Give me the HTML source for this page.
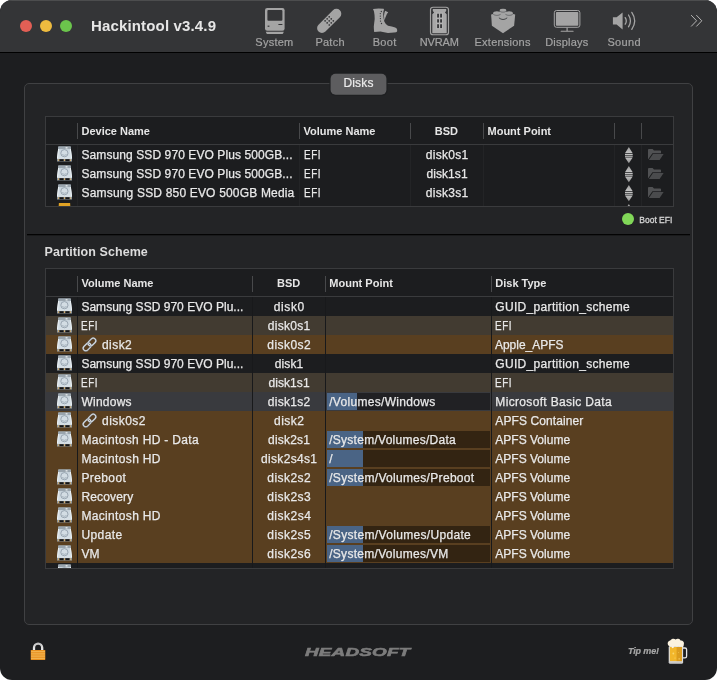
<!DOCTYPE html>
<html lang="en">
<head>
<meta charset="utf-8">
<title>Hackintool v3.4.9</title>
<style>
*{box-sizing:border-box;margin:0;padding:0}
html,body{width:717px;height:680px;background:#fff;overflow:hidden}
body{font-family:"Liberation Sans",sans-serif;color:#e4e4e4}
.win{position:absolute;left:0;top:0;width:717px;height:680px;border-radius:12px;background:#1d1e20;overflow:hidden;will-change:transform}
.abs{position:absolute}
.titlebar{position:absolute;left:0;top:0;width:717px;height:52px;background:#343537;border-top:1px solid #4c4d4e}
.tbline{position:absolute;left:0;top:52px;width:717px;height:1px;background:#000}
.dot{position:absolute;top:20px;width:12px;height:12px;border-radius:50%}
.title{position:absolute;left:91px;top:17px;font-weight:bold;font-size:15px;line-height:18px;color:#e6e6e6;white-space:nowrap}
.tl{position:absolute;top:35px;font-size:11px;line-height:14px;color:#a3a3a3;white-space:nowrap;transform:translateX(-50%);-webkit-text-stroke:0.2px #a3a3a3}
.group{position:absolute;left:24px;top:83px;width:669px;height:542px;border:1px solid #404143;border-radius:5px;background:#232426}
.tabh{position:absolute;left:328px;top:71px}
.tab{position:absolute;left:331px;top:74px;width:55px;height:21px;color:#ececec;font-size:12px;line-height:19px;text-align:center;letter-spacing:0.15px;-webkit-text-stroke:0.2px #ececec}
.sep{position:absolute;left:27px;top:234px;width:663px;height:1px;background:#030303;box-shadow:0 1px 0 rgba(0,0,0,.28)}
.table{position:absolute;left:45px;width:629px;border:1px solid #3a3b3d;background:#1c1d1f;overflow:hidden}
.th{position:absolute;font-size:11px;font-weight:bold;line-height:14px;color:#e6e6e6;white-space:nowrap}
.hsep{position:absolute;width:1px;height:16px;background:#48494b}
.hline{position:absolute;left:0;width:627px;height:1px;background:#3a3b3d}
.row{position:absolute;left:0;width:627px;height:19px}
.cell{position:absolute;top:1px;height:19px;font-size:12px;line-height:19px;color:#e9e9e9;white-space:nowrap;-webkit-text-stroke:0.25px #e9e9e9}
.vl{position:absolute;width:1px;background:#18191b}
.vf{position:absolute;width:1px;background:#232426}
.pt{position:absolute;font-size:12.5px;font-weight:bold;color:#dcdcdc;white-space:nowrap;letter-spacing:0.08px}
.mp{position:absolute;top:1px;height:17px;background:rgba(0,0,0,.42)}
.mpf{position:absolute;left:0;top:0;height:17px;background:#4a6485}
.c-efi{background:#423b31}
.c-br{background:#593f20}
.c-win{background:#393a3e}
</style>
</head>
<body>

<svg width="0" height="0" style="position:absolute"><defs><linearGradient id="dg" x1="0" y1="0" x2="0" y2="1"><stop offset="0" stop-color="#b4c0c9"/><stop offset="0.25" stop-color="#ccd7df"/><stop offset="1" stop-color="#dae4ea"/></linearGradient><linearGradient id="sg" x1="0" y1="0" x2="0" y2="1"><stop offset="0" stop-color="#9a9a9a"/><stop offset="1" stop-color="#c4c4c4"/></linearGradient><linearGradient id="sg2" x1="0" y1="0" x2="0" y2="1"><stop offset="0" stop-color="#c0c0c0"/><stop offset="1" stop-color="#8e8e8e"/></linearGradient><linearGradient id="lk" x1="0" y1="0" x2="0" y2="1"><stop offset="0" stop-color="#c4c4c4"/><stop offset="1" stop-color="#f4f4f4"/></linearGradient><g id="disk" transform="translate(0 0.4)"><path d="M1.4 0.2 H13.6 L15 11.9 V14.8 H0 V11.9 Z" fill="url(#dg)"/><path d="M1.4 0.2 H13.6 L13.9 2.5 H1.1 Z" fill="#9aa5ae"/><path d="M1.1 2.5 L0 11.9 H1 L2 2.5Z" fill="#eef3f6"/><path d="M13.9 2.5 L15 11.9 H14 L13 2.5Z" fill="#eef3f6"/><rect x="8.6" y="0.9" width="1.9" height="1.1" fill="#fbfcfd"/><circle cx="7.4" cy="6.8" r="3.6" fill="#d3dde4" stroke="#8593a0" stroke-width="0.75"/><path d="M5.3 7.6 a2.3 2.3 0 0 0 4.2 0" fill="none" stroke="#8f9da9" stroke-width="0.6"/><rect x="0" y="11.9" width="15" height="2.9" fill="#8d979e"/><rect x="0" y="11.7" width="15" height="0.8" fill="#e3eaef"/><rect x="2.3" y="12.8" width="4.4" height="2" fill="#141516"/><rect x="8.3" y="12.8" width="4.4" height="2" fill="#141516"/><rect x="1.1" y="13" width="1.1" height="1.5" fill="#ddb068"/><rect x="6.9" y="13" width="1.2" height="1.5" fill="#ddb068"/><rect x="12.8" y="13" width="1.1" height="1.5" fill="#ddb068"/></g><g id="step"><path d="M3.85 0 L7.7 6.2 H0 Z" fill="url(#sg)"/><rect x="0" y="7" width="7.7" height="1.1" fill="#c2c2c2"/><rect x="0" y="8.7" width="7.7" height="1.1" fill="#c2c2c2"/><path d="M0 10.5 H7.7 L3.85 16.3 Z" fill="url(#sg2)"/></g><g id="fold"><path d="M0 0.9 a0.9 0.9 0 0 1 0.9 -0.9 H4.6 L6 1.5 H12.2 a0.8 0.8 0 0 1 0.8 0.8 V4.2 H4.4 L0 10.6 Z" fill="#505153"/><path d="M5 5 H15.6 L11.6 11.1 H0.9 Z" fill="#4a4b4d"/></g><g id="link" fill="none" stroke-linecap="round"><g transform="rotate(-45 7.5 7.5)"><rect x="-0.3" y="4.9" width="8.8" height="5.2" rx="2.6" stroke="#767e87" stroke-width="1.75"/><rect x="-0.3" y="4.9" width="8.8" height="5.2" rx="2.6" stroke="#dde2e7" stroke-width="0.95"/><rect x="6.5" y="4.9" width="8.8" height="5.2" rx="2.6" stroke="#767e87" stroke-width="1.75"/><rect x="6.5" y="4.9" width="8.8" height="5.2" rx="2.6" stroke="#dde2e7" stroke-width="0.95"/></g></g></defs></svg>
<div class="win">
<div class="titlebar"></div><div class="tbline"></div>
<div class="dot" style="left:20px;background:#e25f55"></div>
<div class="dot" style="left:40px;background:#eebb3f"></div>
<div class="dot" style="left:60px;background:#6bc54c"></div>
<div class="title" style="letter-spacing:0.152px">Hackintool v3.4.9</div>
<svg class="abs" style="left:263px;top:6px" width="24" height="30" viewBox="0 0 24 30" ><rect x="2" y="2" width="19.6" height="22.8" rx="2.2" fill="#a4a4a4"/><rect x="4.4" y="4.1" width="15" height="10.7" rx="1" fill="#343537"/><rect x="15.4" y="18" width="4" height="1" fill="#343537"/><rect x="4.6" y="19.6" width="1.8" height="1.2" fill="#343537"/><path d="M2.8 25.7h18l-0.6 1.6a1 1 0 0 1-0.9 0.7H4.3a1 1 0 0 1-0.9-0.7z" fill="#a4a4a4"/></svg>
<svg class="abs" style="left:312px;top:4px" width="34" height="34" viewBox="0 0 34 34" ><g transform="rotate(-45 17.2 16.9)"><rect x="2.0999999999999996" y="11.999999999999998" width="30.2" height="9.8" rx="4.9" fill="#a4a4a4"/><circle cx="14.30" cy="14.00" r="0.85" fill="#343537"/><circle cx="14.30" cy="16.90" r="0.85" fill="#343537"/><circle cx="14.30" cy="19.80" r="0.85" fill="#343537"/><circle cx="17.20" cy="14.00" r="0.85" fill="#343537"/><circle cx="17.20" cy="16.90" r="0.85" fill="#343537"/><circle cx="17.20" cy="19.80" r="0.85" fill="#343537"/><circle cx="20.10" cy="14.00" r="0.85" fill="#343537"/><circle cx="20.10" cy="16.90" r="0.85" fill="#343537"/><circle cx="20.10" cy="19.80" r="0.85" fill="#343537"/></g></svg>
<svg class="abs" style="left:368px;top:4px" width="34" height="34" viewBox="0 0 34 34" ><path d="M5 4.9 Q10 4.3 15.6 4.8 L16 5.4 Q15 8 15.2 10.5 Q15.4 14.5 16.4 17.8 Q17.6 20.6 20 21.7 Q24 22.4 27.2 23.4 Q29.2 24.3 29.2 26 L29.1 27.4 Q28.6 28.4 26 28.6 L20 28.9 Q16 28.2 12.5 27.6 L6.2 27.9 Q5.8 25 5.8 22.5 Q6.3 18 6.7 15 Q6.6 10 6 7.5 Z" fill="#a4a4a4"/><path d="M17.1 6.8 L20.2 8.3 Q18.3 10.3 17.5 13.2 Q17.1 14.8 16.5 16.4 L15.9 12 Q16.2 9 17.1 6.8 Z" fill="#a4a4a4"/><circle cx="13.3" cy="7.5" r="0.65" fill="#343537"/><circle cx="12.3" cy="9.6" r="0.65" fill="#343537"/><circle cx="12.3" cy="12.1" r="0.65" fill="#343537"/><circle cx="12.4" cy="14.6" r="0.65" fill="#343537"/><circle cx="12.5" cy="17.1" r="0.65" fill="#343537"/><circle cx="13.5" cy="19.5" r="0.65" fill="#343537"/></svg>
<svg class="abs" style="left:422px;top:3px" width="34" height="34" viewBox="0 0 34 34" ><rect x="8.5" y="4.25" width="18" height="27.5" rx="2.6" fill="none" stroke="#a2a2a2" stroke-width="1.15"/><path d="M10.8 5.9 H24.2 V8 L22.9 9.5 L24.7 11.2 V30.2 H10.3 V11.2 L12.1 9.5 L10.8 8 Z" fill="#a8a8a8"/><rect x="14" y="9.4" width="7" height="17" fill="#b2b2b2"/><rect x="15.25" y="10.75" width="1.6" height="3.8" fill="#242527"/><rect x="15.25" y="16.25" width="1.6" height="3.3" fill="#242527"/><rect x="15.25" y="21.25" width="1.6" height="3.8" fill="#242527"/><rect x="18.25" y="10.75" width="1.6" height="3.8" fill="#242527"/><rect x="18.25" y="16.25" width="1.6" height="3.3" fill="#242527"/><rect x="18.25" y="21.25" width="1.6" height="3.8" fill="#242527"/></svg>
<svg class="abs" style="left:485px;top:3px" width="36" height="36" viewBox="0 0 36 36" ><path d="M6.1 11.6 L18 8.4 L30.2 11.6 L29.1 22.8 L18 30.2 L6.9 22.8 Z" fill="#a4a4a4"/><path d="M14.8 7.1 v2.2 a3.2 1.4 0 0 0 6.4 0 v-2.2z" fill="#a4a4a4"/><ellipse cx="18" cy="7.1" rx="3.2" ry="1.45" fill="#a4a4a4"/><path d="M14.9 8.0 a3.1 1.2 0 0 0 6.2 0" fill="none" stroke="#58595b" stroke-width="0.7"/><path d="M8.2 9.9 v1.9 a3.7 1.6 0 0 0 7.4 0 v-1.9z" fill="#a4a4a4"/><ellipse cx="11.9" cy="9.9" rx="3.7" ry="1.65" fill="#a4a4a4"/><path d="M8.3 10.9 a3.6 1.5 0 0 0 7.2 0" fill="none" stroke="#58595b" stroke-width="0.7"/><path d="M20.4 9.9 v1.9 a3.7 1.6 0 0 0 7.4 0 v-1.9z" fill="#a4a4a4"/><ellipse cx="24.1" cy="9.9" rx="3.7" ry="1.65" fill="#a4a4a4"/><path d="M20.5 10.9 a3.6 1.5 0 0 0 7.2 0" fill="none" stroke="#58595b" stroke-width="0.7"/><path d="M14.2 15.1 Q18 18.2 21.9 15.1" fill="none" stroke="#3c3d3f" stroke-width="0.9" stroke-linecap="round"/></svg>
<svg class="abs" style="left:550px;top:6px" width="34" height="30" viewBox="0 0 34 30" ><rect x="4.3" y="4.5" width="25.6" height="16.8" rx="2.2" fill="none" stroke="#a4a4a4" stroke-width="1"/><rect x="5.9" y="6.1" width="22.4" height="13.6" rx="0.8" fill="#a4a4a4"/><rect x="16.5" y="21.5" width="1.2" height="3.6" fill="#a4a4a4"/><rect x="10.6" y="24.7" width="13" height="1.1" rx="0.5" fill="#a4a4a4"/></svg>
<svg class="abs" style="left:610px;top:8px" width="30" height="26" viewBox="0 0 30 26" ><path d="M2.9 9.3 H6.6 L12.6 4.4 V21.4 L6.6 16.5 H2.9 Z" fill="#a4a4a4"/><path d="M15.2 9.6 Q17.4 12.9 15.2 16.2" fill="none" stroke="#a4a4a4" stroke-width="1.3" stroke-linecap="round"/><path d="M18.5 7 Q22.4 12.9 18.5 18.8" fill="none" stroke="#a4a4a4" stroke-width="1.3" stroke-linecap="round"/><path d="M21.8 4.4 Q27.6 12.9 21.8 21.4" fill="none" stroke="#a4a4a4" stroke-width="1.3" stroke-linecap="round"/></svg>
<svg class="abs" style="left:688px;top:12px" width="18" height="18" viewBox="0 0 18 18" ><path d="M3.4 3.4 L8.6 8.8 L3.4 14.2 M8.6 3.4 L13.8 8.8 L8.6 14.2" fill="none" stroke="#b4b4b4" stroke-width="1" stroke-linecap="round" stroke-linejoin="round"/></svg>
<div class="tl" style="left:274.3px;letter-spacing:0.263px;margin-left:0.13px">System</div>
<div class="tl" style="left:330.0px;letter-spacing:0.24px;margin-left:0.12px">Patch</div>
<div class="tl" style="left:384.5px;letter-spacing:0.353px;margin-left:0.18px">Boot</div>
<div class="tl" style="left:439.4px;letter-spacing:-0.134px;margin-left:-0.07px">NVRAM</div>
<div class="tl" style="left:502.5px;letter-spacing:0.232px;margin-left:0.12px">Extensions</div>
<div class="tl" style="left:566.7px;letter-spacing:0.203px;margin-left:0.10px">Displays</div>
<div class="tl" style="left:624.0px;letter-spacing:0.322px;margin-left:0.16px">Sound</div>
<div class="group"></div><svg class="tabh" width="62" height="28" viewBox="0 0 62 28"><rect x="1.4" y="1.7" width="58.2" height="23.2" rx="6" fill="#1f2022"/><rect x="2.6" y="2.8" width="55.8" height="20.9" rx="5" fill="#5d5d5f"/></svg><div class="tab">Disks</div><div class="sep"></div>
<div class="table" style="top:116px;height:91px">
<div class="th" style="left:35.5px;top:7px">Device Name</div>
<div class="th" style="left:257.5px;top:7px">Volume Name</div>
<div class="th" style="left:388.7px;top:7px">BSD</div>
<div class="th" style="left:441.5px;top:7px">Mount Point</div>
<div class="hsep" style="left:31px;top:6px"></div>
<div class="hsep" style="left:253px;top:6px"></div>
<div class="hsep" style="left:364px;top:6px"></div>
<div class="hsep" style="left:437px;top:6px"></div>
<div class="hsep" style="left:568px;top:6px"></div>
<div class="hsep" style="left:595px;top:6px"></div>
<div class="hline" style="top:27px"></div>
<div class="vf" style="left:31px;top:28px;height:62px"></div>
<div class="vf" style="left:253px;top:28px;height:62px"></div>
<div class="vf" style="left:364px;top:28px;height:62px"></div>
<div class="vf" style="left:437px;top:28px;height:62px"></div>
<div class="vf" style="left:568px;top:28px;height:62px"></div>
<div class="vf" style="left:595px;top:28px;height:62px"></div>
<div class="row" style="top:28px">
<svg class="abs" style="left:10.9px;top:1px;" width="16" height="16" viewBox="0 0 16 16"><use href="#disk"/></svg>
<div class="cell" style="left:35.5px;letter-spacing:0.09px;">Samsung SSD 970 EVO Plus 500GB...</div>
<div class="cell" style="left:257.6px;letter-spacing:0.7px;transform:scaleX(0.8220);transform-origin:0 50%;">EFI</div>
<div class="cell" style="left:365px;width:72px;text-align:center;letter-spacing:0.319px;text-indent:0.319px;">disk0s1</div>
<svg class="abs" style="left:578.6px;top:1.6px;" width="8" height="17" viewBox="0 0 8 17"><use href="#step"/></svg>
<svg class="abs" style="left:601.7px;top:4px;" width="16" height="12" viewBox="0 0 16 12"><use href="#fold"/></svg>
</div>
<div class="row" style="top:47px">
<svg class="abs" style="left:10.9px;top:1px;" width="16" height="16" viewBox="0 0 16 16"><use href="#disk"/></svg>
<div class="cell" style="left:35.5px;letter-spacing:0.09px;">Samsung SSD 970 EVO Plus 500GB...</div>
<div class="cell" style="left:257.6px;letter-spacing:0.7px;transform:scaleX(0.8220);transform-origin:0 50%;">EFI</div>
<div class="cell" style="left:365px;width:72px;text-align:center;letter-spacing:0.085px;text-indent:0.085px;">disk1s1</div>
<svg class="abs" style="left:578.6px;top:1.6px;" width="8" height="17" viewBox="0 0 8 17"><use href="#step"/></svg>
<svg class="abs" style="left:601.7px;top:4px;" width="16" height="12" viewBox="0 0 16 12"><use href="#fold"/></svg>
</div>
<div class="row" style="top:66px">
<svg class="abs" style="left:10.9px;top:1px;" width="16" height="16" viewBox="0 0 16 16"><use href="#disk"/></svg>
<div class="cell" style="left:35.5px;letter-spacing:0.178px;">Samsung SSD 850 EVO 500GB Media</div>
<div class="cell" style="left:257.6px;letter-spacing:0.7px;transform:scaleX(0.8220);transform-origin:0 50%;">EFI</div>
<div class="cell" style="left:365px;width:72px;text-align:center;letter-spacing:0.302px;text-indent:0.302px;">disk3s1</div>
<svg class="abs" style="left:578.6px;top:1.6px;" width="8" height="17" viewBox="0 0 8 17"><use href="#step"/></svg>
<svg class="abs" style="left:601.7px;top:4px;" width="16" height="12" viewBox="0 0 16 12"><use href="#fold"/></svg>
</div>
<div class="row" style="top:85px">
<svg class="abs" style="left:11px;top:1px" width="16" height="15" viewBox="0 0 16 15"><path d="M1.9 0 H13.1 L13.3 3 H1.7 Z" fill="#e0a224"/></svg>
<svg class="abs" style="left:578.6px;top:1.6px;" width="8" height="17" viewBox="0 0 8 17"><use href="#step"/></svg>
</div>
</div>
<div class="abs" style="left:621.8px;top:212.8px;width:12.4px;height:12.4px;border-radius:50%;background:#81d758"></div>
<div class="abs" style="left:639.3px;top:215.3px;font-size:8.5px;line-height:11px;color:#d4d4d4;white-space:nowrap;-webkit-text-stroke:0.28px #d8d8d8;letter-spacing:-0.011px">Boot EFI</div>
<div class="pt" style="left:44.5px;top:244px;line-height:16px">Partition Scheme</div>
<div class="table" style="top:268px;height:301px">
<div class="th" style="left:35.5px;top:7px">Volume Name</div>
<div class="th" style="left:231px;top:7px">BSD</div>
<div class="th" style="left:283.3px;top:7px">Mount Point</div>
<div class="th" style="left:449.3px;top:7px">Disk Type</div>
<div class="hsep" style="left:31px;top:7px"></div>
<div class="hsep" style="left:206px;top:7px"></div>
<div class="hsep" style="left:279px;top:7px"></div>
<div class="hsep" style="left:445px;top:7px"></div>
<div class="hline" style="top:27px"></div>
<div class="row " style="top:28px">
<svg class="abs" style="left:10.9px;top:1px;" width="16" height="16" viewBox="0 0 16 16"><use href="#disk"/></svg>
<div class="cell" style="left:35.4px;letter-spacing:0.023px;">Samsung SSD 970 EVO Plu...</div>
<div class="cell" style="left:206px;width:74px;text-align:center;letter-spacing:0.571px;text-indent:0.571px;">disk0</div>
<div class="cell" style="left:449.3px;letter-spacing:0.322px;">GUID_partition_scheme</div>
</div>
<div class="row c-efi" style="top:47px">
<svg class="abs" style="left:10.9px;top:1px;" width="16" height="16" viewBox="0 0 16 16"><use href="#disk"/></svg>
<div class="cell" style="left:35.4px;letter-spacing:0.7px;transform:scaleX(0.8220);transform-origin:0 50%;">EFI</div>
<div class="cell" style="left:206px;width:74px;text-align:center;letter-spacing:0.319px;text-indent:0.319px;">disk0s1</div>
<div class="cell" style="left:449.3px;letter-spacing:0.7px;transform:scaleX(0.8220);transform-origin:0 50%;">EFI</div>
</div>
<div class="row c-br" style="top:66px">
<svg class="abs" style="left:10.9px;top:1px;" width="16" height="16" viewBox="0 0 16 16"><use href="#disk"/></svg>
<svg class="abs" style="left:36px;top:2px;overflow:visible" width="16" height="16" viewBox="0 0 16 16"><use href="#link"/></svg>
<div class="cell" style="left:56px;letter-spacing:0.446px;">disk2</div>
<div class="cell" style="left:206px;width:74px;text-align:center;letter-spacing:0.469px;text-indent:0.469px;">disk0s2</div>
<div class="cell" style="left:449.3px;transform:scaleX(0.9954);transform-origin:0 50%;">Apple_APFS</div>
</div>
<div class="row " style="top:85px">
<svg class="abs" style="left:10.9px;top:1px;" width="16" height="16" viewBox="0 0 16 16"><use href="#disk"/></svg>
<div class="cell" style="left:35.4px;letter-spacing:0.023px;">Samsung SSD 970 EVO Plu...</div>
<div class="cell" style="left:206px;width:74px;text-align:center;letter-spacing:0.146px;text-indent:0.146px;">disk1</div>
<div class="cell" style="left:449.3px;letter-spacing:0.322px;">GUID_partition_scheme</div>
</div>
<div class="row c-efi" style="top:104px">
<svg class="abs" style="left:10.9px;top:1px;" width="16" height="16" viewBox="0 0 16 16"><use href="#disk"/></svg>
<div class="cell" style="left:35.4px;letter-spacing:0.7px;transform:scaleX(0.8220);transform-origin:0 50%;">EFI</div>
<div class="cell" style="left:206px;width:74px;text-align:center;letter-spacing:0.085px;text-indent:0.085px;">disk1s1</div>
<div class="cell" style="left:449.3px;letter-spacing:0.7px;transform:scaleX(0.8220);transform-origin:0 50%;">EFI</div>
</div>
<div class="row c-win" style="top:123px">
<svg class="abs" style="left:10.9px;top:1px;" width="16" height="16" viewBox="0 0 16 16"><use href="#disk"/></svg>
<div class="cell" style="left:35.4px;letter-spacing:0.252px;">Windows</div>
<div class="cell" style="left:206px;width:74px;text-align:center;letter-spacing:0.285px;text-indent:0.285px;">disk1s2</div>
<div class="mp" style="left:281px;width:163px"><div class="mpf" style="width:30px"></div></div>
<div class="cell" style="left:283.2px;letter-spacing:0.308px;">/Volumes/Windows</div>
<div class="cell" style="left:449.3px;letter-spacing:0.334px;">Microsoft Basic Data</div>
</div>
<div class="row c-br" style="top:142px">
<svg class="abs" style="left:10.9px;top:1px;" width="16" height="16" viewBox="0 0 16 16"><use href="#disk"/></svg>
<svg class="abs" style="left:36px;top:2px;overflow:visible" width="16" height="16" viewBox="0 0 16 16"><use href="#link"/></svg>
<div class="cell" style="left:56px;letter-spacing:0.469px;">disk0s2</div>
<div class="cell" style="left:206px;width:74px;text-align:center;letter-spacing:0.446px;text-indent:0.446px;">disk2</div>
<div class="cell" style="left:449.3px;letter-spacing:0.091px;">APFS Container</div>
</div>
<div class="row c-br" style="top:161px">
<svg class="abs" style="left:10.9px;top:1px;" width="16" height="16" viewBox="0 0 16 16"><use href="#disk"/></svg>
<div class="cell" style="left:35.4px;letter-spacing:0.324px;">Macintosh HD - Data</div>
<div class="cell" style="left:206px;width:74px;text-align:center;letter-spacing:0.219px;text-indent:0.219px;">disk2s1</div>
<div class="mp" style="left:281px;width:163px"><div class="mpf" style="width:36px"></div></div>
<div class="cell" style="left:283.2px;letter-spacing:0.269px;">/System/Volumes/Data</div>
<div class="cell" style="left:449.3px;letter-spacing:0.01px;">APFS Volume</div>
</div>
<div class="row c-br" style="top:180px">
<div class="cell" style="left:35.4px;letter-spacing:0.34px;">Macintosh HD</div>
<div class="cell" style="left:206px;width:74px;text-align:center;letter-spacing:0.316px;text-indent:0.316px;">disk2s4s1</div>
<div class="mp" style="left:281px;width:163px"><div class="mpf" style="width:36px"></div></div>
<div class="cell" style="left:283.2px;">/</div>
<div class="cell" style="left:449.3px;letter-spacing:0.01px;">APFS Volume</div>
</div>
<div class="row c-br" style="top:199px">
<svg class="abs" style="left:10.9px;top:1px;" width="16" height="16" viewBox="0 0 16 16"><use href="#disk"/></svg>
<div class="cell" style="left:35.4px;letter-spacing:0.395px;">Preboot</div>
<div class="cell" style="left:206px;width:74px;text-align:center;letter-spacing:0.469px;text-indent:0.469px;">disk2s2</div>
<div class="mp" style="left:281px;width:163px"><div class="mpf" style="width:36px"></div></div>
<div class="cell" style="left:283.2px;letter-spacing:0.315px;">/System/Volumes/Preboot</div>
<div class="cell" style="left:449.3px;letter-spacing:0.01px;">APFS Volume</div>
</div>
<div class="row c-br" style="top:218px">
<svg class="abs" style="left:10.9px;top:1px;" width="16" height="16" viewBox="0 0 16 16"><use href="#disk"/></svg>
<div class="cell" style="left:35.4px;letter-spacing:0.173px;">Recovery</div>
<div class="cell" style="left:206px;width:74px;text-align:center;letter-spacing:0.469px;text-indent:0.469px;">disk2s3</div>
<div class="cell" style="left:449.3px;letter-spacing:0.01px;">APFS Volume</div>
</div>
<div class="row c-br" style="top:237px">
<svg class="abs" style="left:10.9px;top:1px;" width="16" height="16" viewBox="0 0 16 16"><use href="#disk"/></svg>
<div class="cell" style="left:35.4px;letter-spacing:0.34px;">Macintosh HD</div>
<div class="cell" style="left:206px;width:74px;text-align:center;letter-spacing:0.502px;text-indent:0.502px;">disk2s4</div>
<div class="cell" style="left:449.3px;letter-spacing:0.01px;">APFS Volume</div>
</div>
<div class="row c-br" style="top:256px">
<svg class="abs" style="left:10.9px;top:1px;" width="16" height="16" viewBox="0 0 16 16"><use href="#disk"/></svg>
<div class="cell" style="left:35.4px;letter-spacing:0.439px;">Update</div>
<div class="cell" style="left:206px;width:74px;text-align:center;letter-spacing:0.469px;text-indent:0.469px;">disk2s5</div>
<div class="mp" style="left:281px;width:163px"><div class="mpf" style="width:36px"></div></div>
<div class="cell" style="left:283.2px;letter-spacing:0.327px;">/System/Volumes/Update</div>
<div class="cell" style="left:449.3px;letter-spacing:0.01px;">APFS Volume</div>
</div>
<div class="row c-br" style="top:275px">
<svg class="abs" style="left:10.9px;top:1px;" width="16" height="16" viewBox="0 0 16 16"><use href="#disk"/></svg>
<div class="cell" style="left:35.4px;letter-spacing:0.1px;">VM</div>
<div class="cell" style="left:206px;width:74px;text-align:center;letter-spacing:0.469px;text-indent:0.469px;">disk2s6</div>
<div class="mp" style="left:281px;width:163px"><div class="mpf" style="width:36px"></div></div>
<div class="cell" style="left:283.2px;letter-spacing:0.291px;">/System/Volumes/VM</div>
<div class="cell" style="left:449.3px;letter-spacing:0.01px;">APFS Volume</div>
</div>
<div class="row " style="top:294px">
<svg class="abs" style="left:10.9px;top:1px;" width="16" height="16" viewBox="0 0 16 16"><use href="#disk"/></svg>
<div class="cell" style="left:35.4px;letter-spacing:0.191px;">Samsung SSD 850 EVO 50...</div>
<div class="cell" style="left:206px;width:74px;text-align:center;letter-spacing:0.496px;text-indent:0.496px;">disk3</div>
<div class="cell" style="left:449.3px;letter-spacing:0.322px;">GUID_partition_scheme</div>
</div>
<div class="vl" style="left:31px;top:28px;height:272px"></div>
<div class="vl" style="left:206px;top:28px;height:272px"></div>
<div class="vl" style="left:279px;top:28px;height:272px"></div>
<div class="vl" style="left:445px;top:28px;height:272px"></div>
</div>
<svg class="abs" style="left:28px;top:640px" width="20" height="22" viewBox="0 0 20 22" ><path d="M6 10.4 V7.8 a4.1 4.1 0 0 1 8.2 0 V10.4" fill="none" stroke="url(#lk)" stroke-width="2.3"/><rect x="2.7" y="10" width="14.6" height="9.9" rx="0.6" fill="#e68a17"/><rect x="3" y="10.90" width="14" height="0.8" fill="#f6c366"/><rect x="3" y="12.75" width="14" height="0.8" fill="#f6c366"/><rect x="3" y="14.60" width="14" height="0.8" fill="#f6c366"/><rect x="3" y="16.45" width="14" height="0.8" fill="#f6c366"/><rect x="3" y="18.30" width="14" height="0.8" fill="#f6c366"/></svg>
<div class="abs" style="left:305px;top:645px;width:106px;height:14px;overflow:visible"><div style="font-size:11.2px;font-weight:bold;font-style:italic;line-height:14px;color:#7c7c7c;white-space:nowrap;transform-origin:0 50%;transform:scaleX(1.69);letter-spacing:0.1px;-webkit-text-stroke:0.55px #7c7c7c">HEADSOFT</div></div>
<div class="abs" style="left:628px;top:646.3px;font-size:9px;font-weight:bold;font-style:italic;color:#a6a6a6;-webkit-text-stroke:0.2px #a6a6a6;line-height:11px;white-space:nowrap;letter-spacing:-0.141px">Tip me!</div>
<svg class="abs" style="left:666px;top:637px" width="24" height="30" viewBox="0 0 24 30" ><path d="M17 11 h2 a1.6 1.6 0 0 1 1.6 1.6 v6.6 a1.6 1.6 0 0 1 -1.6 1.6 h-2" fill="none" stroke="#e6e6e6" stroke-width="1.3"/><rect x="2.7" y="9" width="14.4" height="17.6" rx="1.4" fill="#dcdcdc"/><rect x="3.9" y="10" width="12" height="14.2" fill="#f2b62b"/><rect x="10.6" y="10" width="5.3" height="14.2" fill="#db9c1e"/><rect x="2.9" y="24.4" width="14" height="2.2" rx="1" fill="#c9c9c9"/><circle cx="7.3" cy="16.5" r="0.9" fill="#f9d66f"/><circle cx="9" cy="21" r="0.6" fill="#f9d66f"/><circle cx="13.2" cy="21.8" r="0.9" fill="#f0bd4a"/><circle cx="12.6" cy="15.6" r="0.5" fill="#f0bd4a"/><path d="M2.2 8.2 a3 3 0 0 1 2 -4.6 a3.6 3.6 0 0 1 5.4 -1.2 a3.4 3.4 0 0 1 5 1.2 a2.8 2.8 0 0 1 3.2 3.6 q0.2 2.6 -1.4 3 q-1 0 -1 -1.2 q-1.4 1.2 -2.8 0 q-1.6 1 -3 0 q-0.8 0.4 -1.6 0 q0 2.2 -1.3 2.2 q-1.2 0 -1.2 -2 q-2.6 0.4 -3.3 -1z" fill="#fbf2de"/></svg>
</div>
</body>
</html>
